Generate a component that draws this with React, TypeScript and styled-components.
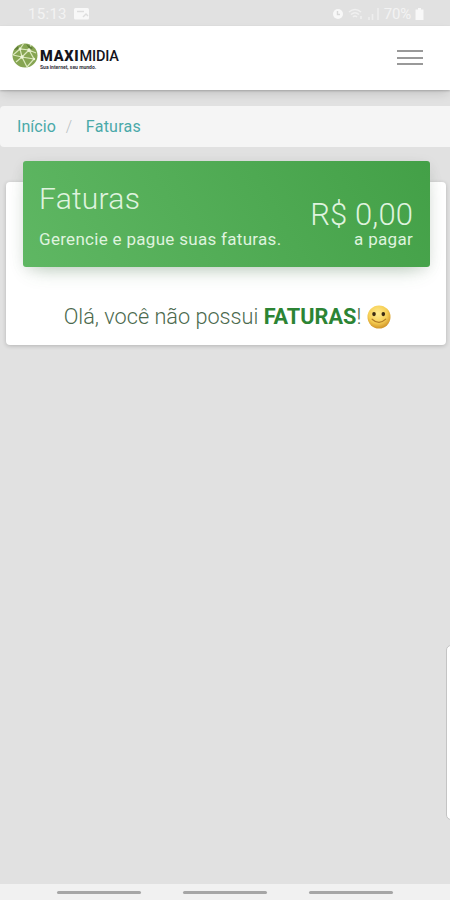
import React from "react";
import styled, { createGlobalStyle } from "styled-components";

const GlobalStyle = createGlobalStyle`
  *, *::before, *::after { box-sizing: border-box; }
  html, body { margin: 0; padding: 0; overflow: hidden; }
  body { background: #e1e1e1; font-family: Roboto, "Liberation Sans", sans-serif; font-weight: 300; }
`;

const Screen = styled.div`
  position: relative;
  display: flex;
  flex-direction: column;
  width: 450px;
  height: 900px;
  background: #e1e1e1;
  overflow: hidden;
`;

const StatusBar = styled.header`
  display: flex;
  align-items: center;
  justify-content: space-between;
  flex: none;
  height: 26px;
  padding: 2px 26px 0 28px;
  color: #f3f3f3;
  font-size: 15px;
  font-weight: 400;
`;

const StatusGroup = styled.div<{ $gap: number }>`
  display: flex;
  align-items: center;
  gap: ${(p) => p.$gap}px;
`;

const StatusText = styled.span<{ $spacing?: number }>`
  letter-spacing: ${(p) => p.$spacing ?? 0}px;
  line-height: 18px;
`;

const Navbar = styled.nav`
  position: relative;
  display: flex;
  align-items: center;
  justify-content: space-between;
  flex: none;
  height: 64px;
  padding: 0 27px 5px 12px;
  background: #fff;
  box-shadow: 0 1px 2px rgba(0, 0, 0, 0.2), 0 5px 10px -2px rgba(0, 0, 0, 0.14);
`;

const Brand = styled.div`
  display: flex;
  align-items: center;
  gap: 2px;
`;

const BrandText = styled.div`
  display: flex;
  flex-direction: column;
  padding-top: 7px;
`;

const BrandName = styled.div`
  color: #15151d;
  font-size: 14.5px;
  line-height: 15px;
  font-weight: 500;
  letter-spacing: -0.2px;
  white-space: nowrap;

  b { font-weight: 900; letter-spacing: 0.8px; }
`;

const BrandTagline = styled.div`
  color: #33333b;
  font-size: 5px;
  line-height: 6px;
  font-weight: 700;
  white-space: nowrap;
`;

const MenuButton = styled.button`
  display: flex;
  flex-direction: column;
  gap: 4.5px;
  width: 26px;
  margin-top: 4px;
  padding: 0;
  border: 0;
  background: none;
`;

const MenuLine = styled.span`
  height: 2px;
  background: #999;
`;

const Breadcrumb = styled.div`
  display: flex;
  align-items: center;
  flex: none;
  height: 41px;
  margin-top: 16px;
  padding: 0 17px;
  border-radius: 4px 0 0 4px;
  background: #f5f5f5;
  font-size: 16px;
  font-weight: 400;
`;

const Crumb = styled.a<{ $spacing: number }>`
  color: #4aa9a9;
  letter-spacing: ${(p) => p.$spacing}px;
`;

const Slash = styled.span`
  width: 30px;
  padding-left: 10px;
  color: #b9bfc3;
  font-weight: 300;
`;

const Card = styled.section`
  display: flex;
  flex-direction: column;
  flex: none;
  height: 163px;
  margin: 35px 4px 0 6px;
  padding: 0 16px 0 17px;
  border-radius: 4px;
  background: #fff;
  box-shadow: 0 1px 4px rgba(0, 0, 0, 0.2);
`;

const CardHeader = styled.div`
  display: flex;
  justify-content: space-between;
  flex: none;
  height: 106px;
  margin-top: -21px;
  padding: 0 17px 0 16px;
  border-radius: 3px;
  background: linear-gradient(60deg, #5fb763, #43a047);
  box-shadow: 0 9px 20px -10px rgba(60, 120, 64, 0.42), 0 3px 14px rgba(0, 0, 0, 0.07);
  color: #dff3de;
`;

const HeaderColumn = styled.div<{ $end?: boolean }>`
  display: flex;
  flex-direction: column;
  align-items: ${(p) => (p.$end ? "flex-end" : "flex-start")};
  padding-top: ${(p) => (p.$end ? 39 : 20)}px;
  white-space: nowrap;
`;

const Title = styled.h1`
  margin: 0 0 12px;
  font-size: 30px;
  line-height: 36px;
  font-weight: 300;
  letter-spacing: 0.25px;
`;

const Amount = styled.div`
  font-size: 31px;
  line-height: 29px;
  letter-spacing: 0.1px;
`;

const Caption = styled.div<{ $spacing: number }>`
  font-size: 17px;
  line-height: 20px;
  font-weight: 400;
  letter-spacing: ${(p) => p.$spacing}px;
`;

const Message = styled.p`
  display: flex;
  align-items: center;
  justify-content: center;
  margin: 36px 0 0;
  padding-left: 2px;
  color: #4b694d;
  font-size: 21.7px;
  line-height: 28px;
  white-space: pre;

  b { color: #2c8434; font-weight: 700; }
  svg { margin-left: 6px; }
`;

const EdgePanel = styled.aside`
  position: absolute;
  top: 645px;
  right: -8px;
  width: 12px;
  height: 175px;
  border: 1px solid #c4c4c4;
  border-radius: 5px;
  background: #fff;
`;

const NavigationBar = styled.footer`
  display: flex;
  justify-content: center;
  gap: 42px;
  flex: none;
  height: 16px;
  margin-top: auto;
  padding-top: 7px;
  background: #f1f1f1;
`;

const NavigationPill = styled.span`
  width: 84px;
  height: 3px;
  border-radius: 2px;
  background: #a6a6a6;
`;

const CalendarIcon = () => (
  <svg width="16" height="12" viewBox="0 0 16 12">
    <rect x="0" y="0" width="15" height="11.5" rx="1.5" fill="#f8f8f8" />
    <path d="M3 3.5h7M9 9l3-3 2 2" stroke="#dedede" strokeWidth="1.4" fill="none" />
  </svg>
);

const AlarmIcon = () => (
  <svg width="12" height="12" viewBox="0 0 12 12">
    <circle cx="6" cy="6" r="5" fill="#f8f8f8" />
    <path d="M5.5 3v3.5H8" stroke="#d9d9d9" strokeWidth="1.4" fill="none" />
  </svg>
);

const WifiIcon = () => (
  <svg width="16" height="12" viewBox="0 0 16 12" fill="none" stroke="#f0f0f0" strokeWidth="1.5">
    <path d="M1 4Q7-1 13 4M3 6.5Q7 3 11 6.5M5 9Q7 7 9 9M13 8v3" />
  </svg>
);

const SignalIcon = () => (
  <svg width="12" height="14" viewBox="0 0 12 14" fill="none" stroke="#eee" strokeWidth="1.6">
    <path d="M1 10v3M4.5 7v6M10 1v12" />
  </svg>
);

const BatteryIcon = () => (
  <svg width="9" height="12" viewBox="0 0 9 12" fill="#f8f8f8">
    <path d="M3 0h3v1.5h2.5V12h-8V1.5H3z" />
  </svg>
);

const GlobeLogo = () => (
  <svg width="26" height="25" viewBox="0 0 26 25">
    <ellipse cx="13" cy="12.5" rx="12.5" ry="12" fill="#86a552" />
    <g fill="none" stroke="#dbe8bd" strokeWidth="1.2">
      <path d="M1 12 8 6l9 1 7 3M8 6l2 8 12 2M17 7l-7 7-6 5M10 14l5 10M17 7l5 9-7 8M8 6l4-6M17 7l2-5M1 12l9 2" />
    </g>
    <path d="M14 1l7 4-3 2zM2 7l4-4 1 3z" fill="#5d7c36" />
    <g fill="#eef5d9">
      <circle cx="8" cy="6" r="1.4" />
      <circle cx="17" cy="7" r="1.7" />
      <circle cx="10" cy="14" r="1.7" />
      <circle cx="22" cy="16" r="1.2" />
    </g>
  </svg>
);

const SmileIcon = () => (
  <svg width="24" height="24" viewBox="0 0 25 25">
    <defs>
      <radialGradient id="smile" cx="45%" cy="35%" r="62%">
        <stop offset="0" stopColor="#ffec91" />
        <stop offset="0.65" stopColor="#f6cf55" />
        <stop offset="1" stopColor="#d59b2e" />
      </radialGradient>
    </defs>
    <circle cx="12.5" cy="12.5" r="12" fill="url(#smile)" />
    <ellipse cx="7.3" cy="9.4" rx="1.9" ry="2.2" fill="#3b2a12" />
    <ellipse cx="17" cy="9.4" rx="1.9" ry="2.2" fill="#3b2a12" />
    <path d="M5.3 14.8Q12.5 21.5 19.5 14.8" fill="none" stroke="#b07a27" strokeWidth="1.2" strokeLinecap="round" />
  </svg>
);

export default function App() {
  return (
    <Screen>
      <GlobalStyle />
      <StatusBar>
        <StatusGroup $gap={7}>
          <StatusText $spacing={0.3}>15:13</StatusText>
          <CalendarIcon />
        </StatusGroup>
        <StatusGroup $gap={4}>
          <AlarmIcon />
          <WifiIcon />
          <SignalIcon />
          <StatusText $spacing={-0.2}>70%</StatusText>
          <BatteryIcon />
        </StatusGroup>
      </StatusBar>
      <Navbar>
        <Brand>
          <GlobeLogo />
          <BrandText>
            <BrandName><b>MAXI</b>MIDIA</BrandName>
            <BrandTagline>Sua internet, seu mundo.</BrandTagline>
          </BrandText>
        </Brand>
        <MenuButton aria-label="Menu">
          <MenuLine />
          <MenuLine />
          <MenuLine />
        </MenuButton>
      </Navbar>
      <Breadcrumb>
        <Crumb $spacing={0.05}>Início</Crumb>
        <Slash>/</Slash>
        <Crumb $spacing={0.25}>Faturas</Crumb>
      </Breadcrumb>
      <Card>
        <CardHeader>
          <HeaderColumn>
            <Title>Faturas</Title>
            <Caption $spacing={0.3}>Gerencie e pague suas faturas.</Caption>
          </HeaderColumn>
          <HeaderColumn $end>
            <Amount>R$ 0,00</Amount>
            <Caption $spacing={0.3}>a pagar</Caption>
          </HeaderColumn>
        </CardHeader>
        <Message>
          <span>Olá, você não possui </span><b>FATURAS</b><span>!</span>
          <SmileIcon />
        </Message>
      </Card>
      <EdgePanel />
      <NavigationBar>
        <NavigationPill />
        <NavigationPill />
        <NavigationPill />
      </NavigationBar>
    </Screen>
  );
}
